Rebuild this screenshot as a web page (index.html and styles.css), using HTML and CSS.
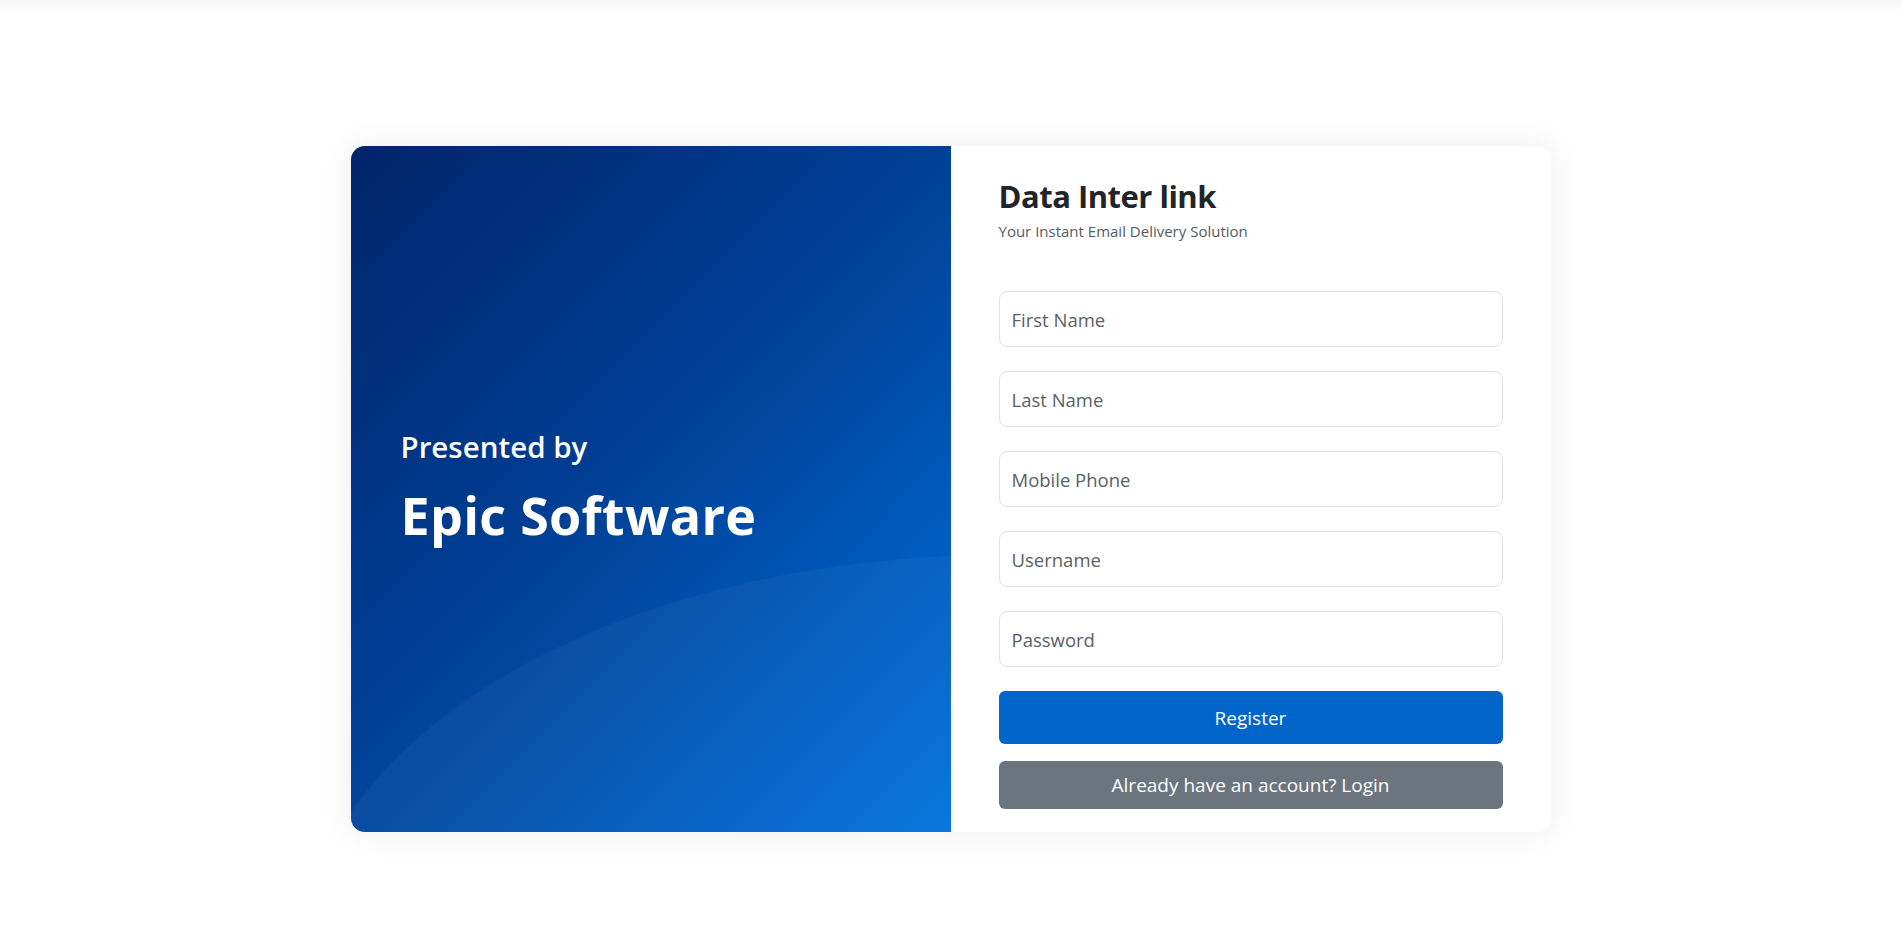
FILE: index.html
```html
<!DOCTYPE html>
<html lang="en">
<head>
<meta charset="utf-8">
<title>Data Inter link - Register</title>
<link rel="stylesheet" href="styles.css">
</head>
<body>
<div class="topbar"></div>
<main class="page">
  <section class="card">
    <div class="brand-panel">
      <div class="brand-text">
        <h3 class="presented">Presented by</h3>
        <h1 class="company">Epic Software</h1>
      </div>
    </div>
    <div class="form-panel">
      <h2 class="title">Data Inter link</h2>
      <p class="subtitle">Your Instant Email Delivery Solution</p>
      <form class="form">
        <input class="field" type="text" placeholder="First Name">
        <input class="field" type="text" placeholder="Last Name">
        <input class="field" type="text" placeholder="Mobile Phone">
        <input class="field" type="text" placeholder="Username">
        <input class="field" type="password" placeholder="Password">
        <button type="button" class="btn btn-primary">Register</button>
        <button type="button" class="btn btn-secondary">Already have an account? Login</button>
      </form>
    </div>
  </section>
</main>
</body>
</html>
```
FILE: styles.css
```css
* { box-sizing: border-box; }
html, body { margin: 0; padding: 0; background: #ffffff; }
body {
  font-family: "Open Sans", "Noto Sans", sans-serif;
  color: #212529;
  min-height: 100vh;
}
.topbar {
  height: 0;
  box-shadow: 0 0 14px 5px rgba(0, 0, 0, 0.065);
}
.page {
  padding-top: 146px;
  display: flex;
  justify-content: center;
}
.card {
  width: 1200px;
  display: flex;
  border-radius: 14px;
  background: #fff;
  box-shadow: 0 0 32px rgba(0, 0, 0, 0.08);
  overflow: hidden;
}
.brand-panel {
  width: 600px;
  flex: 0 0 600px;
  position: relative;
  overflow: hidden;
  display: flex;
  align-items: center;
  padding-left: 50px;
  background: linear-gradient(135deg, #00246a 0%, #003f95 45%, #0072de 100%);
  color: #fff;
}
.brand-panel::before {
  content: "";
  position: absolute;
  left: -52px;
  top: 409px;
  width: 1400px;
  height: 826px;
  border-radius: 50%;
  background: rgba(255, 255, 255, 0.035);
}
.brand-text {
  position: relative;
  margin-bottom: 3px;
}
.presented {
  margin: 0 0 19px;
  font-size: 29.5px;
  font-weight: 600;
  line-height: 1.2;
}
.company {
  margin: 0;
  font-size: 52px;
  font-weight: 700;
  line-height: 1.2;
  letter-spacing: 0.3px;
}
.form-panel {
  flex: 1;
  padding: 32px 48px 23px;
}
.title {
  margin: 0 0 6px;
  font-size: 31px;
  font-weight: 700;
  line-height: 1.2;
  letter-spacing: -0.5px;
  color: #212529;
}
.subtitle {
  margin: 0;
  font-size: 15px;
  line-height: 21px;
  color: #555b61;
}
.form {
  margin-top: 49px;
  display: flex;
  flex-direction: column;
}
.field {
  height: 56px;
  margin: 0 0 24px;
  padding: 0 12px;
  border: 1px solid #dee2e6;
  border-radius: 8px;
  font-family: inherit;
  font-size: 18.5px;
  color: #212529;
  background: #fff;
  outline: none;
}
.field::placeholder {
  color: #595f66;
  opacity: 1;
}
.btn {
  border: 0;
  border-radius: 6px;
  color: #fff;
  font-family: inherit;
  font-size: 19px;
  cursor: pointer;
}
.btn-primary {
  height: 53px;
  background: #0165ca;
  margin-bottom: 17px;
}
.btn-secondary {
  height: 48px;
  background: #6c757d;
}
```
